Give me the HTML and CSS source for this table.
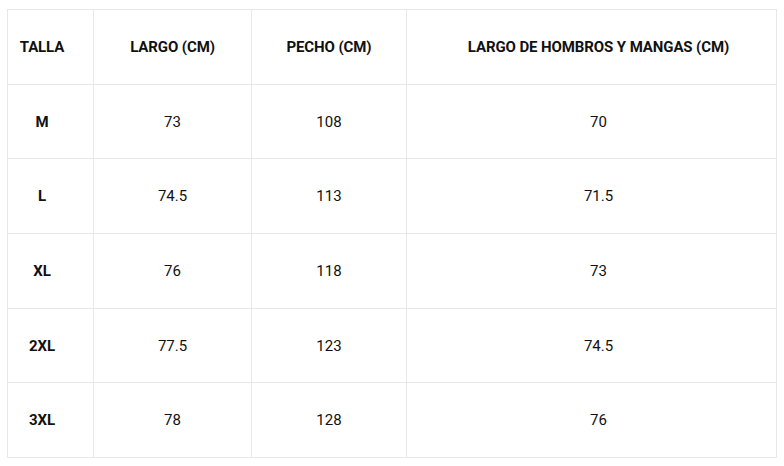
FILE: index.html
```html
<!DOCTYPE html>
<html lang="es">
<head>
<meta charset="utf-8">
<title>Tabla de tallas</title>
<link rel="stylesheet" href="styles.css">
</head>
<body>
<div class="wrap">
<table class="sizes">
  <colgroup>
    <col class="c1"><col class="c2"><col class="c3"><col class="c4">
  </colgroup>
  <thead>
    <tr><th class="first">TALLA</th><th>LARGO (CM)</th><th>PECHO (CM)</th><th class="last">LARGO DE HOMBROS Y MANGAS (CM)</th></tr>
  </thead>
  <tbody>
    <tr><th class="first">M</th><td>73</td><td>108</td><td class="last">70</td></tr>
    <tr><th class="first">L</th><td>74.5</td><td>113</td><td class="last">71.5</td></tr>
    <tr><th class="first">XL</th><td>76</td><td>118</td><td class="last">73</td></tr>
    <tr><th class="first">2XL</th><td>77.5</td><td>123</td><td class="last">74.5</td></tr>
    <tr><th class="first">3XL</th><td>78</td><td>128</td><td class="last">76</td></tr>
  </tbody>
</table>
</div>
</body>
</html>
```

FILE: styles.css
```css
html, body {
  margin: 0;
  padding: 0;
  background: #ffffff;
}
.wrap {
  padding: 9px 8px 0 7px;
}
.sizes {
  border-collapse: collapse;
  width: 769px;
  table-layout: fixed;
  font-family: Roboto, "Liberation Sans", sans-serif;
  color: #111111;
  font-size: 15px;
}
.c1 { width: 86px; }
.c2 { width: 158px; }
.c3 { width: 155px; }
.c4 { width: 370px; }
.sizes th, .sizes td {
  border: 1px solid #e8e8e8;
  height: 73.7px;
  padding: 0;
  text-align: center;
  vertical-align: middle;
}
.sizes th {
  font-weight: 700;
  letter-spacing: -0.1px;
}
.sizes td {
  font-weight: 400;
}
.sizes th.first {
  padding-right: 17px;
}
.sizes .last {
  padding-left: 14px;
}
```
